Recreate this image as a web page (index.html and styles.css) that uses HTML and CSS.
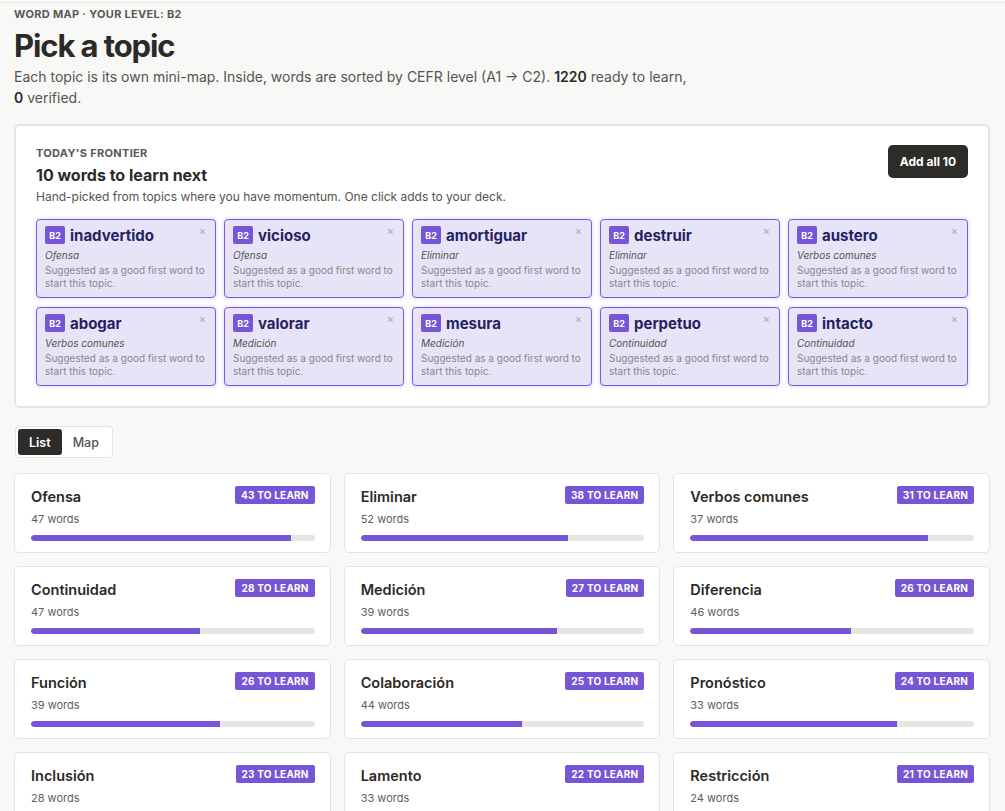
FILE: index.html
```html
<!DOCTYPE html>
<html>
<head>
  <title>Word map</title>
  <link rel="stylesheet" href="styles.css">
</head>
<body>
  <div class="page">
    <div class="eyebrow">Word map · Your level: B2</div>
    <h1 class="page-title">Pick a topic</h1>
    <p class="intro">Each topic is its own mini-map. Inside, words are sorted by CEFR level (A1 → C2). <b>1220</b> ready to learn, <b>0</b> verified.</p>

    <section class="frontier">
      <div class="frontier-head">
        <div>
          <div class="eyebrow">Today's frontier</div>
          <h2>10 words to learn next</h2>
          <p>Hand-picked from topics where you have momentum. One click adds to your deck.</p>
        </div>
        <button class="add-all">Add all 10</button>
      </div>
      <div class="chips">
        <div class="chip">
          <div class="chip-top"><span class="level">B2</span><span class="word">inadvertido</span><span class="close">×</span></div>
          <div class="chip-topic">Ofensa</div>
          <div class="chip-note">Suggested as a good first word to start this topic.</div>
        </div>
        <div class="chip">
          <div class="chip-top"><span class="level">B2</span><span class="word">vicioso</span><span class="close">×</span></div>
          <div class="chip-topic">Ofensa</div>
          <div class="chip-note">Suggested as a good first word to start this topic.</div>
        </div>
        <div class="chip">
          <div class="chip-top"><span class="level">B2</span><span class="word">amortiguar</span><span class="close">×</span></div>
          <div class="chip-topic">Eliminar</div>
          <div class="chip-note">Suggested as a good first word to start this topic.</div>
        </div>
        <div class="chip">
          <div class="chip-top"><span class="level">B2</span><span class="word">destruir</span><span class="close">×</span></div>
          <div class="chip-topic">Eliminar</div>
          <div class="chip-note">Suggested as a good first word to start this topic.</div>
        </div>
        <div class="chip">
          <div class="chip-top"><span class="level">B2</span><span class="word">austero</span><span class="close">×</span></div>
          <div class="chip-topic">Verbos comunes</div>
          <div class="chip-note">Suggested as a good first word to start this topic.</div>
        </div>
        <div class="chip">
          <div class="chip-top"><span class="level">B2</span><span class="word">abogar</span><span class="close">×</span></div>
          <div class="chip-topic">Verbos comunes</div>
          <div class="chip-note">Suggested as a good first word to start this topic.</div>
        </div>
        <div class="chip">
          <div class="chip-top"><span class="level">B2</span><span class="word">valorar</span><span class="close">×</span></div>
          <div class="chip-topic">Medición</div>
          <div class="chip-note">Suggested as a good first word to start this topic.</div>
        </div>
        <div class="chip">
          <div class="chip-top"><span class="level">B2</span><span class="word">mesura</span><span class="close">×</span></div>
          <div class="chip-topic">Medición</div>
          <div class="chip-note">Suggested as a good first word to start this topic.</div>
        </div>
        <div class="chip">
          <div class="chip-top"><span class="level">B2</span><span class="word">perpetuo</span><span class="close">×</span></div>
          <div class="chip-topic">Continuidad</div>
          <div class="chip-note">Suggested as a good first word to start this topic.</div>
        </div>
        <div class="chip">
          <div class="chip-top"><span class="level">B2</span><span class="word">intacto</span><span class="close">×</span></div>
          <div class="chip-topic">Continuidad</div>
          <div class="chip-note">Suggested as a good first word to start this topic.</div>
        </div>
      </div>
    </section>

    <div class="view-toggle">
      <button class="active">List</button>
      <button>Map</button>
    </div>

    <div class="topics">
      <div class="topic">
        <div class="topic-head"><span class="topic-name">Ofensa</span><span class="to-learn">43 to learn</span></div>
        <div class="topic-count">47 words</div>
        <div class="bar"><div class="bar-fill" style="width: 91.5%"></div></div>
      </div>
      <div class="topic">
        <div class="topic-head"><span class="topic-name">Eliminar</span><span class="to-learn">38 to learn</span></div>
        <div class="topic-count">52 words</div>
        <div class="bar"><div class="bar-fill" style="width: 73.1%"></div></div>
      </div>
      <div class="topic">
        <div class="topic-head"><span class="topic-name">Verbos comunes</span><span class="to-learn">31 to learn</span></div>
        <div class="topic-count">37 words</div>
        <div class="bar"><div class="bar-fill" style="width: 83.8%"></div></div>
      </div>
      <div class="topic">
        <div class="topic-head"><span class="topic-name">Continuidad</span><span class="to-learn">28 to learn</span></div>
        <div class="topic-count">47 words</div>
        <div class="bar"><div class="bar-fill" style="width: 59.6%"></div></div>
      </div>
      <div class="topic">
        <div class="topic-head"><span class="topic-name">Medición</span><span class="to-learn">27 to learn</span></div>
        <div class="topic-count">39 words</div>
        <div class="bar"><div class="bar-fill" style="width: 69.2%"></div></div>
      </div>
      <div class="topic">
        <div class="topic-head"><span class="topic-name">Diferencia</span><span class="to-learn">26 to learn</span></div>
        <div class="topic-count">46 words</div>
        <div class="bar"><div class="bar-fill" style="width: 56.5%"></div></div>
      </div>
      <div class="topic">
        <div class="topic-head"><span class="topic-name">Función</span><span class="to-learn">26 to learn</span></div>
        <div class="topic-count">39 words</div>
        <div class="bar"><div class="bar-fill" style="width: 66.7%"></div></div>
      </div>
      <div class="topic">
        <div class="topic-head"><span class="topic-name">Colaboración</span><span class="to-learn">25 to learn</span></div>
        <div class="topic-count">44 words</div>
        <div class="bar"><div class="bar-fill" style="width: 56.8%"></div></div>
      </div>
      <div class="topic">
        <div class="topic-head"><span class="topic-name">Pronóstico</span><span class="to-learn">24 to learn</span></div>
        <div class="topic-count">33 words</div>
        <div class="bar"><div class="bar-fill" style="width: 72.7%"></div></div>
      </div>
      <div class="topic">
        <div class="topic-head"><span class="topic-name">Inclusión</span><span class="to-learn">23 to learn</span></div>
        <div class="topic-count">28 words</div>
        <div class="bar"><div class="bar-fill" style="width: 82.1%"></div></div>
      </div>
      <div class="topic">
        <div class="topic-head"><span class="topic-name">Lamento</span><span class="to-learn">22 to learn</span></div>
        <div class="topic-count">33 words</div>
        <div class="bar"><div class="bar-fill" style="width: 66.7%"></div></div>
      </div>
      <div class="topic">
        <div class="topic-head"><span class="topic-name">Restricción</span><span class="to-learn">21 to learn</span></div>
        <div class="topic-count">24 words</div>
        <div class="bar"><div class="bar-fill" style="width: 87.5%"></div></div>
      </div>
    </div>
  </div>
</body>
</html>
```

FILE: styles.css
```css
body {
  font-family: Inter, "Noto Sans", sans-serif;
  background-color: #f8f8f7;
  color: #2b2a27;
  margin: 0;
  padding: 0;
}

.page {
  margin-top: 2px;
  border-top: 1px solid #e6e6e4;
  padding: 4px 15px 40px 14px;
}

.eyebrow {
  font-size: 11px;
  line-height: 14px;
  font-weight: 700;
  letter-spacing: 0.3px;
  text-transform: uppercase;
  color: #5a5955;
}

.page-title {
  margin: 5px 0 0;
  font-size: 31px;
  line-height: 40px;
  font-weight: 700;
  letter-spacing: -1.1px;
  color: #2b2a27;
}

.intro {
  margin: 0;
  max-width: 680px;
  font-size: 14px;
  line-height: 21px;
  color: #55544f;
}

.intro b {
  font-weight: 600;
  color: #2b2a27;
}

/* frontier */

.frontier {
  margin-top: 16px;
  background-color: #fff;
  border: 2px solid #e4e4e2;
  border-radius: 6px;
  padding: 20px;
}

.frontier-head {
  display: flex;
  justify-content: space-between;
  align-items: flex-start;
}

.frontier-head h2 {
  margin: 4px 0 0;
  font-size: 16px;
  line-height: 22px;
  font-weight: 700;
  color: #2b2a27;
}

.frontier-head p {
  margin: 2px 0 0;
  font-size: 12px;
  line-height: 18px;
  color: #55544f;
}

.add-all {
  margin-top: -1px;
  height: 33px;
  padding: 0 12px;
  background-color: #2e2c28;
  color: #fff;
  border: none;
  border-radius: 5px;
  font-family: inherit;
  font-size: 12px;
  font-weight: 700;
  cursor: pointer;
}

.chips {
  margin-top: 13px;
  display: grid;
  grid-template-columns: repeat(5, 1fr);
  gap: 9px 8px;
}

.chip {
  background-color: #e7e4f7;
  border: 1px solid #7a5ce0;
  border-radius: 4px;
  padding: 6px 8px 7px;
  box-shadow: 0 0 4px rgba(120, 92, 224, 0.3);
}

.chip-top {
  display: flex;
  align-items: center;
  height: 18px;
}

.level {
  width: 20px;
  height: 18px;
  display: flex;
  align-items: center;
  justify-content: center;
  background-color: #7656d6;
  color: #fff;
  font-size: 9px;
  font-weight: 700;
  border-radius: 2px;
}

.word {
  margin-left: 5px;
  font-size: 15px;
  font-weight: 700;
  color: #271f63;
  flex: 1;
}

.close {
  margin-right: 1px;
  align-self: flex-start;
  margin-top: -2px;
  font-size: 11px;
  color: #a8a6b4;
}

.chip-topic {
  margin-top: 5px;
  font-size: 10px;
  line-height: 13px;
  font-style: italic;
  color: #55544f;
}

.chip-note {
  margin-top: 2px;
  font-size: 10px;
  line-height: 13px;
  color: #87868a;
}

/* list / map */

.view-toggle {
  margin: 18px 0 0 1px;
  display: inline-flex;
  padding: 2px;
  background-color: #fff;
  border: 1px solid #e4e4e2;
  border-radius: 4px;
}

.view-toggle button {
  height: 26px;
  padding: 0 11px;
  border: none;
  border-radius: 3px;
  background: none;
  font-family: inherit;
  font-size: 12.5px;
  font-weight: 500;
  color: #55544f;
  cursor: pointer;
}

.view-toggle button.active {
  background-color: #2e2c28;
  color: #fff;
  font-weight: 600;
}

/* topic cards */

.topics {
  margin-top: 15px;
  display: grid;
  grid-template-columns: repeat(3, 1fr);
  gap: 13px;
}

.topic {
  background-color: #fff;
  border: 1px solid #e4e4e2;
  border-radius: 5px;
  padding: 12px 15px 11px 16px;
}

.topic-head {
  display: flex;
  justify-content: space-between;
  align-items: center;
  height: 20px;
}

.topic-name {
  font-size: 14.5px;
  font-weight: 600;
  color: #2b2a27;
}

.to-learn {
  margin-top: -2px;
  height: 18px;
  padding: 0 6px;
  display: flex;
  align-items: center;
  background-color: #7656d6;
  color: #fff;
  font-size: 10px;
  font-weight: 700;
  letter-spacing: 0.2px;
  text-transform: uppercase;
  border-radius: 2px;
}

.topic-count {
  margin-top: 5px;
  font-size: 11px;
  line-height: 16px;
  color: #5f5e5a;
}

.bar {
  margin-top: 8px;
  height: 6px;
  background-color: #e5e5e2;
  border-radius: 3px;
  overflow: hidden;
}

.bar-fill {
  height: 100%;
  background-color: #7656d6;
  border-radius: 3px 0 0 3px;
}
```
